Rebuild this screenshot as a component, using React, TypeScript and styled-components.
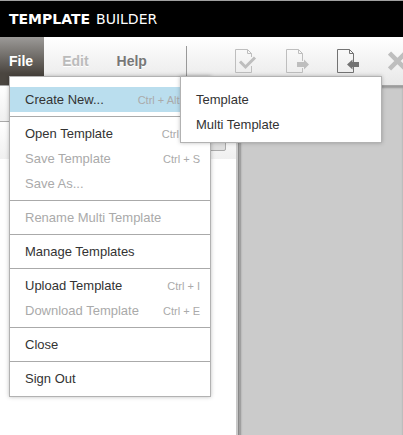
import React from "react";
import styled, { createGlobalStyle } from "styled-components";

const GlobalStyle = createGlobalStyle`
  *, *::before, *::after { box-sizing: border-box; }
  html, body, #root { height: 100%; }
  body {
    margin: 0;
    overflow: hidden;
    background: #fff;
    font-family: "Liberation Sans", Arial, sans-serif;
    font-size: 13px;
    color: #333;
  }
`;

const Page = styled.div`
  display: flex;
  flex-direction: column;
  height: 100%;
  overflow: hidden;
`;

const TitleBar = styled.header`
  flex: none;
  height: 37px;
  padding-left: 9px;
  border-top: 1px solid #a0a0a0;
  background: #000;
  display: flex;
  align-items: center;
`;

const Title = styled.h1`
  display: flex;
  gap: 6px;
  margin: 0;
  font: 400 14px/18px "DejaVu Sans", Verdana, sans-serif;
  color: #fff;
  white-space: nowrap;
`;

const Toolbar = styled.div`
  flex: none;
  display: flex;
  height: 49px;
  border-bottom: 1px solid #a6a6a6;
  background: linear-gradient(#fff, #e8e8e8);
`;

const MenuBar = styled.nav`
  display: flex;
  gap: 8px;
`;

const MenuButton = styled.button<{ $active?: boolean }>`
  height: 48px;
  padding: 0 10px;
  border: 0;
  background: ${(p) => (p.$active ? "linear-gradient(#9c9a98, #4b4640 75%)" : "none")};
  color: ${(p) => (p.$active ? "#fff" : "#777")};
  font: bold 14px/18px "Liberation Sans", Arial, sans-serif;
  text-shadow: ${(p) => (p.$active ? "none" : "0 1px 0 #fff")};
  &:first-child { padding: 0 11px 0 9px; }
  &:disabled { color: #bbb; }
`;

const Divider = styled.div`
  flex: none;
  width: 1px;
  margin: 9px 0 9px 29px;
  background: #999;
`;

const Tools = styled.div`
  display: flex;
  align-items: flex-start;
  gap: 27px;
  padding: 12px 0 0 48px;
`;

const ToolButton = styled.button`
  flex: none;
  padding: 0;
  border: 0;
  background: none;
  width: 24px;
  height: 24px;
  color: #737373;
  &:disabled { color: #bebebe; }
  svg { display: block; }
`;

const Workspace = styled.main`
  flex: 1;
  display: flex;
  min-height: 0;
`;

const SidePanel = styled.aside`
  flex: none;
  width: 236px;
  background: #fff;
`;

const PanelHead = styled.div`
  height: 35px;
  background: linear-gradient(#fff, #f0f0f0);
`;

const PanelBar = styled.div`
  height: 38px;
  padding: 8px 10px 0 0;
  border-top: 1px solid #aaa;
  background: linear-gradient(#fff, #f0f0f0);
  display: flex;
  justify-content: flex-end;
  align-items: flex-start;
`;

const PanelButton = styled.button`
  width: 60px;
  height: 21px;
  padding: 0;
  border: 1px solid #aaa;
  border-radius: 2px;
  background: #dedede;
`;

const Splitter = styled.div`
  flex: none;
  width: 5px;
  border: solid;
  border-width: 0 2px;
  border-color: #a0a0a0;
  border-left-color: #c8c8c8;
  background: #888;
`;

const Canvas = styled.section`
  flex: 1;
  background: #cbcbcb;
  box-shadow: inset 0 2px 2px #999;
`;

const Menu = styled.div<{ $left: number }>`
  position: absolute;
  top: 76px;
  left: ${(p) => p.$left}px;
  width: 202px;
  padding: 10px 0 5px;
  border: 1px solid #b2b2b2;
  background: #fff;
  box-shadow: 0 0 4px rgba(0, 0, 0, 0.25);
`;

const MenuRow = styled.button<{ $highlighted?: boolean }>`
  display: flex;
  align-items: center;
  justify-content: space-between;
  width: 100%;
  height: 25px;
  padding: 0 10px 0 15px;
  border: 0;
  background: ${(p) => (p.$highlighted ? "#badeee" : "none")};
  color: #333;
  font: 13px/16px "Liberation Sans", Arial, sans-serif;
  text-align: left;
  white-space: nowrap;
  &:disabled { color: #aaa; }
`;

const Shortcut = styled.kbd`
  font: 11px/16px "Liberation Sans", Arial, sans-serif;
  color: #aaa;
`;

const Separator = styled.hr`
  height: 1px;
  margin: 4px 0;
  border: 0;
  background: #aaa;
`;

type Item = { label: string; keys?: string; disabled?: boolean; highlighted?: boolean };

const fileMenu: Item[][] = [
  [{ label: "Create New...", keys: "Ctrl + Alt + N", highlighted: true }],
  [
    { label: "Open Template", keys: "Ctrl + O" },
    { label: "Save Template", keys: "Ctrl + S", disabled: true },
    { label: "Save As...", disabled: true },
  ],
  [{ label: "Rename Multi Template", disabled: true }],
  [{ label: "Manage Templates" }],
  [
    { label: "Upload Template", keys: "Ctrl + I" },
    { label: "Download Template", keys: "Ctrl + E", disabled: true },
  ],
  [{ label: "Close" }],
  [{ label: "Sign Out" }],
];

const createMenu: Item[][] = [[{ label: "Template" }, { label: "Multi Template" }]];

function MenuPanel({ groups, left, name }: { groups: Item[][]; left: number; name: string }) {
  return (
    <Menu $left={left} role="menu" aria-label={name}>
      {groups.map((group, index) => (
        <React.Fragment key={index}>
          {index > 0 && <Separator />}
          {group.map((item) => (
            <MenuRow key={item.label} role="menuitem" disabled={item.disabled} $highlighted={item.highlighted}>
              <span>{item.label}</span>
              {item.keys && <Shortcut>{item.keys}</Shortcut>}
            </MenuRow>
          ))}
        </React.Fragment>
      ))}
    </Menu>
  );
}

function PageIcon({ children }: { children: React.ReactNode }) {
  return (
    <svg width="24" height="24" viewBox="0 0 24 24" fill="none" stroke="currentColor">
      {children}
    </svg>
  );
}

export default function App() {
  return (
    <Page>
      <GlobalStyle />
      <TitleBar>
        <Title><b>TEMPLATE</b> <span>BUILDER</span></Title>
      </TitleBar>
      <Toolbar>
        <MenuBar>
          <MenuButton $active>File</MenuButton>
          <MenuButton disabled>Edit</MenuButton>
          <MenuButton>Help</MenuButton>
        </MenuBar>
        <Divider />
        <Tools>
          <ToolButton disabled aria-label="Validate">
            <PageIcon>
              <path d="M16.5 17V23.5H.5V.5H12.5L16.5 4.5V8M12.5 .5V4.5H16.5" />
              <path d="M5 12.5L10.500 18L20 8.5" strokeWidth="3" />
            </PageIcon>
          </ToolButton>
          <ToolButton disabled aria-label="Export">
            <PageIcon>
              <path d="M16.5 19V23.5H.5V.5H12.5L16.5 4.5V12M12.5 .5V4.5H16.5" />
              <path d="M11 13H18V10.5L23 15.5L18 20.5V18H11Z" fill="currentColor" stroke="none" />
            </PageIcon>
          </ToolButton>
          <ToolButton aria-label="Import">
            <PageIcon>
              <path d="M16.5 18V23.5H.5V.5H12.5L16.5 4.5V13M12.5 .5V4.5H16.5" />
              <path d="M22 13H15.5V10.5L10 15.5L15.5 20.5V18H22Z" fill="currentColor" stroke="none" />
            </PageIcon>
          </ToolButton>
          <ToolButton disabled aria-label="Delete">
            <PageIcon>
              <path d="M1.5 4L17.5 20M17.5 4L1.5 20" strokeWidth="4.500" />
            </PageIcon>
          </ToolButton>
        </Tools>
      </Toolbar>
      <Workspace>
        <SidePanel>
          <PanelHead />
          <PanelBar><PanelButton aria-label="Panel options" /></PanelBar>
        </SidePanel>
        <Splitter />
        <Canvas />
      </Workspace>
      <MenuPanel groups={fileMenu} left={9} name="File" />
      <MenuPanel groups={createMenu} left={180} name="Create New" />
    </Page>
  );
}
